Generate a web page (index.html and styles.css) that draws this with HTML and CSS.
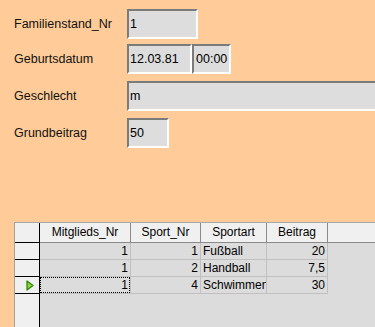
FILE: index.html
```html
<!DOCTYPE html>
<html>
<head>
<meta charset="utf-8">
<link rel="stylesheet" href="styles.css">
</head>
<body>
<div class="form">
  <div class="row r1">
    <div class="label">Familienstand_Nr</div>
    <div class="field w71">1</div>
  </div>
  <div class="row r2">
    <div class="label">Geburtsdatum</div>
    <div class="field w64">12.03.81</div>
    <div class="field w39 time">00:00</div>
  </div>
  <div class="row r3">
    <div class="label">Geschlecht</div>
    <div class="field wide">m</div>
  </div>
  <div class="row r4">
    <div class="label">Grundbeitrag</div>
    <div class="field w42">50</div>
  </div>
</div>
<div class="grid">
  <div class="gc rh hdr"></div>
  <div class="gc hd">Mitglieds_Nr</div>
  <div class="gc hd">Sport_Nr</div>
  <div class="gc hd">Sportart</div>
  <div class="gc hd">Beitrag</div>
  <div class="gc hd last"></div>

  <div class="gc rh"></div>
  <div class="gc num">1</div>
  <div class="gc num">1</div>
  <div class="gc txt">Fußball</div>
  <div class="gc num">20</div>
  <div class="gc fill"></div>

  <div class="gc rh"></div>
  <div class="gc num">1</div>
  <div class="gc num">2</div>
  <div class="gc txt">Handball</div>
  <div class="gc num">7,5</div>
  <div class="gc fill"></div>

  <div class="gc rh cur"><svg width="8" height="11" viewBox="0 0 8 11"><polygon points="1,1 7,5.5 1,10" fill="#8ed23f" stroke="#2f8a0c" stroke-width="1.3" stroke-linejoin="round"/></svg></div>
  <div class="gc num focus"><span class="fr">1</span></div>
  <div class="gc num">4</div>
  <div class="gc txt">Schwimmen</div>
  <div class="gc num">30</div>
  <div class="gc fill"></div>

  <div class="gc rh rest"></div>
  <div class="gc rest-data"></div>
</div>
</body>
</html>
```

FILE: styles.css
```css
html, body {
  margin: 0;
  padding: 0;
  background: #ffcc99;
  height: 100%;
  overflow: hidden;
  font-family: "Liberation Sans", Arial, sans-serif;
  font-size: 12px;
  color: #000;
}
.form {
  padding-top: 9px;
  height: 222px;
  box-sizing: border-box;
}
.row {
  display: flex;
  align-items: stretch;
  height: 30px;
}
.r2 { margin-top: 5px; }
.r3 { margin-top: 7px; }
.r4 { margin-top: 7px; }
.label {
  width: 113px;
  padding-left: 14px;
  display: flex;
  align-items: center;
  font-size: 12.5px;
  color: #111;
}
.field {
  box-sizing: border-box;
  background: #dddddd;
  border-top: 2px solid #7b7b7b;
  border-left: 2px solid #7b7b7b;
  border-right: 2px solid #ffffff;
  border-bottom: 2px solid #ffffff;
  display: flex;
  align-items: center;
  padding-left: 1px;
  font-size: 12.5px;
}
.w71 { width: 71px; }
.w64 { width: 65px; }
.w39 { width: 39px; margin-left: 0; }
.time { padding-left: 2px; }
.w42 { width: 42px; }
.wide { flex: 1; border-right: none; }

.grid {
  margin-left: 14px;
  height: 110px;
  border-left: 1px solid #a0a0a0;
  border-top: 1px solid #a8a8a8;
  display: grid;
  grid-template-columns: 25px 91px 70px 66px 61px 1fr;
  grid-template-rows: 20px 17px 17px 17px 1fr;
  background: #dcdcdc;
}
.gc {
  box-sizing: border-box;
  overflow: hidden;
  white-space: nowrap;
  line-height: 16px;
}
.rh {
  background: #f0f0f0;
  border-right: 1px solid #000;
  border-bottom: 1px solid #000;
}
.hd {
  background: #f0f0f0;
  border-right: 1px solid #8a8a8a;
  border-bottom: 1px solid #8a8a8a;
  text-align: center;
  line-height: 19px;
}
.hd.last { border-right: none; }
.num {
  text-align: right;
  padding-right: 2px;
  border-right: 1px solid #c0c0c0;
  border-bottom: 1px solid #c0c0c0;
}
.txt {
  padding-left: 2px;
  border-right: 1px solid #c0c0c0;
  border-bottom: 1px solid #c0c0c0;
  text-overflow: clip;
}
.fill { background: #dcdcdc; }
.cur {
  display: flex;
  align-items: center;
  justify-content: flex-start;
  padding-left: 11px;
}
.cur svg { display: block; }
.focus {
  padding: 0;
  border-right: 1px solid #c0c0c0;
}
.focus .fr {
  display: block;
  height: 16px;
  box-sizing: border-box;
  border: 1px dotted #000;
  line-height: 14px;
  padding-right: 1px;
  text-align: right;
}
.rest {
  border-bottom: none;
}
.rest-data {
  grid-column: 2 / 7;
  background: #dcdcdc;
}
```
